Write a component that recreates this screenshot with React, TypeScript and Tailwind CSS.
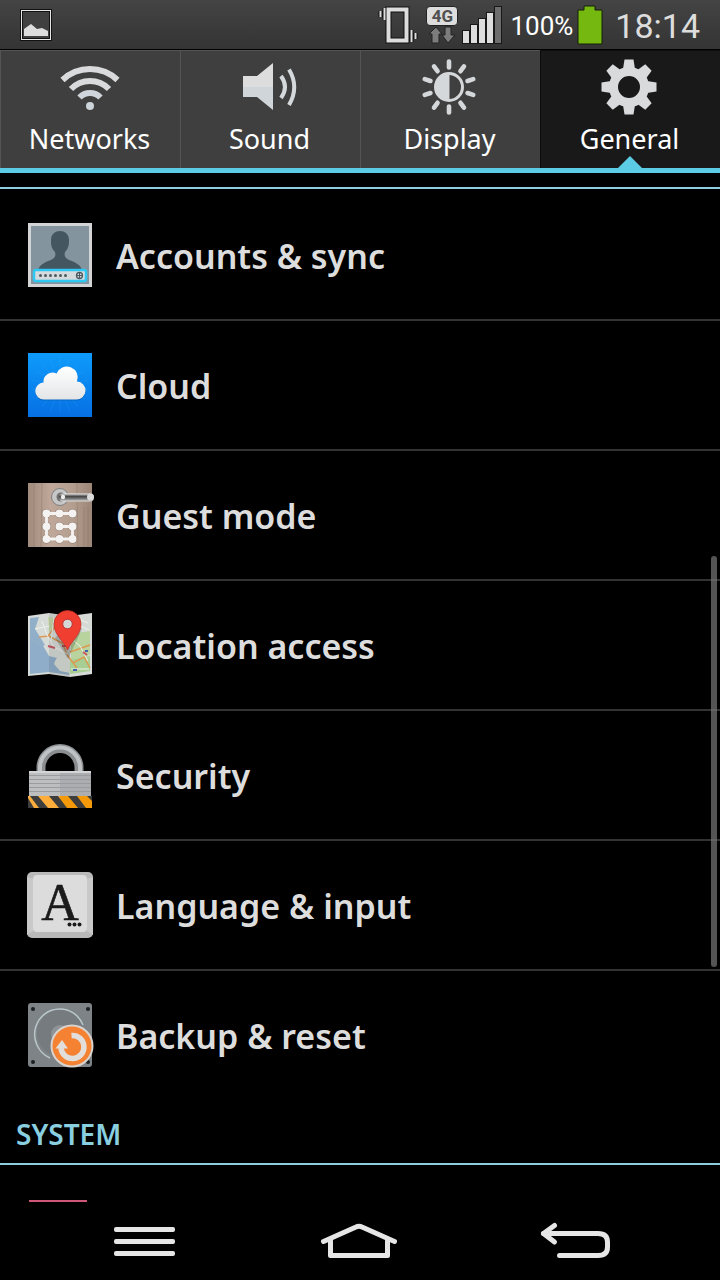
import React, { useState } from "react";

const NetworksIcon = () => (
  <svg viewBox="0 0 64 64" className="size-16" fill="none" stroke="#d8dadc" strokeWidth="6">
    <path d="M4.5 25A40 40 0 0 1 59.5 25" />
    <path d="M13 34A26.5 26.5 0 0 1 51 34" />
    <path d="M21.5 42.5A14.5 14.5 0 0 1 42.5 42.5" stroke="#cfd5da" />
    <circle cx="32" cy="51" r="4" fill="#cdd4d9" stroke="none" />
  </svg>
);

const SoundIcon = () => (
  <svg viewBox="0 0 64 64" className="size-16" fill="none">
    <path d="M5 21H19L35 8V32H5Z" fill="#dddddd" />
    <path d="M5 32H35V55L19 42H5Z" fill="#d0d5d9" />
    <path d="M43 21Q51 32 43 43M51 14.5Q61.5 32 51 50" stroke="#d5d9dc" strokeWidth="4" />
  </svg>
);

const DisplayIcon = () => (
  <svg viewBox="0 0 64 64" className="size-16" fill="none" stroke="#d5d8da">
    <circle cx="31" cy="32" r="13.5" strokeWidth="3" />
    <path d="M31 18.5A13.5 13.5 0 0 0 31 45.5Z" fill="#d5d8da" />
    {[0, 36, 72, 108, 144, 180, 216, 252, 288, 324].map((angle) => (
      <path key={angle} d="M31 6.5V12.5" strokeWidth="4.6" strokeLinecap="round" transform={`rotate(${angle} 31 32)`} />
    ))}
  </svg>
);

const GeneralIcon = () => (
  <svg viewBox="0 0 64 64" className="size-16" fill="#d8dadc">
    <circle cx="31" cy="32" r="15.5" fill="none" stroke="#d8dadc" strokeWidth="9" />
    {[0, 45, 90, 135, 180, 225, 270, 315].map((angle) => (
      <path key={angle} d="M26.5 4.5H35.5L37 14H25Z" transform={`rotate(${angle} 31 32)`} />
    ))}
  </svg>
);

const AccountsIcon = () => (
  <svg viewBox="0 0 72 72" className="size-[72px]">
    <rect x="4" y="4" width="64" height="64" fill="#d2d4d5" />
    <rect x="7" y="7" width="58" height="58" fill="#84949f" />
    <path d="M14 52C15 45 22 43 27 41C31 39 32 37 31 33C27 29 27 25 27 21C27 9 45 9 45 21C45 25 45 29 41 33C40 37 41 39 45 41C50 43 57 45 58 52Z" fill="#44565f" />
    <rect x="10" y="51" width="52" height="11" rx="2" fill="#d5dadd" stroke="#2fc8f2" strokeWidth="2.5" />
    {[16, 21, 26, 31, 36, 41].map((x) => (
      <circle key={x} cx={x + 0.5} cy="56.5" r="1.5" fill="#4b5960" />
    ))}
    <circle cx="55.5" cy="56.5" r="3" fill="none" stroke="#4b5960" strokeWidth="1.3" />
    <path d="M52.5 56.5H58.5M55.5 53.5V59.5" stroke="#4b5960" />
  </svg>
);

const CloudIcon = () => (
  <svg viewBox="0 0 72 72" className="size-[72px]">
    <defs>
      <linearGradient id="sky" x2="0" y2="1">
        <stop stopColor="#0e9cfb" />
        <stop offset="1" stopColor="#066fe4" />
      </linearGradient>
      <linearGradient id="cloud" x2="0" y2="1">
        <stop stopColor="#ffffff" />
        <stop offset="1" stopColor="#e3e5e7" />
      </linearGradient>
    </defs>
    <rect x="4" y="4" width="64" height="64" fill="url(#sky)" />
    {[0, 20, 40, 60, 80, 100, 120, 140, 160].map((angle) => (
      <path key={angle} d="M36 8V64" stroke="#3ab0ff" strokeOpacity="0.2" transform={`rotate(${angle} 36 36)`} />
    ))}
    <path d="M20 51.5A8.5 8.5 0 0 1 19.5 34.5A9 9 0 0 1 32.5 25.5A11 11 0 0 1 53 33.500A9 9 0 0 1 52 51.5Z" fill="#0557a8" opacity="0.6" />
    <path d="M20 50.5A8.5 8.5 0 0 1 19.5 33.5A9 9 0 0 1 32.5 24.5A11 11 0 0 1 53 32.5A9 9 0 0 1 52 50.5Z" fill="url(#cloud)" />
  </svg>
);

const GuestIcon = () => (
  <svg viewBox="0 0 72 72" className="size-[72px]">
    <defs>
      <linearGradient id="wood" x2="1" y2="0">
        <stop stopColor="#a08a7b" />
        <stop offset="0.35" stopColor="#bfa899" />
        <stop offset="0.7" stopColor="#b49e8f" />
        <stop offset="1" stopColor="#9b8576" />
      </linearGradient>
      <linearGradient id="handle" x2="0" y2="1">
        <stop stopColor="#f0f0f0" />
        <stop offset="0.35" stopColor="#444444" />
        <stop offset="0.65" stopColor="#777777" />
        <stop offset="1" stopColor="#e0e0e0" />
      </linearGradient>
    </defs>
    <rect x="4" y="4" width="64" height="64" fill="url(#wood)" />
    <path d="M10 4V68M18 4L17 68M60 28V68M53 4L54 68M64 28V68" stroke="#7d6656" strokeOpacity="0.3" />
    <circle cx="36" cy="18" r="8.5" fill="#c6c6c6" stroke="#808080" />
    <circle cx="37" cy="18" r="4.5" fill="#6e6e6e" />
    <rect x="35" y="14.5" width="35" height="8" rx="4" fill="url(#handle)" />
    <circle cx="66.5" cy="18" r="3.5" fill="#dcdcdc" />
    <circle cx="39" cy="18" r="2.2" fill="#eeeeee" />
    {[34.5, 47.5, 60].map((y) =>
      [22.5, 35.5, 48.5].map((x) => <circle key={`${x}-${y}`} cx={x} cy={y} r="4.6" fill="#8a7567" />)
    )}
    <path d="M48.5 34.5H22.5V60H48.5V47.5H36" fill="none" stroke="#f4f3f2" strokeWidth="2.8" />
    {[34.5, 47.5, 60].map((y) =>
      [22.5, 35.5, 48.5].map((x) => <circle key={`${x}-${y}`} cx={x} cy={y} r="4" fill="#f4f3f2" />)
    )}
  </svg>
);

const LocationIcon = () => (
  <svg viewBox="0 0 72 72" className="size-[72px]">
    <path d="M4 7L25 4L46 7L68 4V65L46 68L25 65L4 67Z" fill="#d6dbd7" />
    <path d="M6 28L18 35L25 47L33 49L45 62V66L25 63L6 65Z" fill="#8fadc8" />
    <path d="M6 9L15 8L11 20L16 28L21 36L17 38L6 33Z" fill="#91afc9" />
    <path d="M24 8L45 10L44 21L33 18L25 23Z" fill="#c6d6a7" />
    <path d="M47 25L66 22V45L58 51L47 57Z" fill="#b9d39e" />
    <path d="M32 50L38 46L46 50V64L36 62L30 55Z" fill="#d9ddd6" />
    <path d="M46 51L66 47V62L46 65Z" fill="#a8cf93" />
    <path d="M15 28L25 27L32 31L38 34L44 47L53 59M24 27L34 14L45 14M49 54L60 48L66 59M46 43L66 36" fill="none" stroke="#dc9a52" strokeWidth="1.5" />
    <path d="M18 12L23 26L30 38L44 45M11 20L25 17M48 30L56 37L64 52M55 10L64 14M54 16L65 21M30 8L27 33M47 60H65" fill="none" stroke="#eef0ea" />
    <path d="M24 37L31 39M38 37H43M59 43L63 46" stroke="#c7545d" strokeWidth="2" />
    <path d="M49 61H53M61 42H64M38 31H43" stroke="#465fb0" strokeWidth="2" />
    <path d="M25 4L46 7V68L25 65Z" fill="#303840" opacity="0.12" />
    <path d="M44 50L31 29L48 8L58 20Z" fill="#000000" opacity="0.18" />
    <path d="M43.5 41C40 32 30 26 30 15A13.5 13.5 0 0 1 57 15C57 26 47 32 43.5 41Z" fill="#f03f31" stroke="#bc2922" strokeWidth="0.7" />
    <circle cx="43.5" cy="15" r="4.8" fill="#d6d6d6" stroke="#bc3029" />
  </svg>
);

const SecurityIcon = () => (
  <svg viewBox="0 0 72 72" className="size-[72px]">
    <defs>
      <clipPath id="tape">
        <rect x="4" y="57" width="64" height="12" />
      </clipPath>
    </defs>
    <path d="M17 33V28.5A19 19 0 0 1 55 28.5V33" fill="none" stroke="#8b8e91" strokeWidth="9" />
    <path d="M16 33V28.5A20 20 0 0 1 56 28.5V33" fill="none" stroke="#bfc2c4" strokeWidth="4" />
    <rect x="5" y="32" width="62" height="25" fill="#bcbec0" />
    <rect x="36" y="32" width="31" height="25" fill="#abadb0" />
    <path d="M5 36.5H67M5 40.5H67M5 44.5H67M5 48.5H67M5 52.5H67" stroke="#9a9da0" />
    <path d="M5 33H67" stroke="#d4d5d6" strokeWidth="2" />
    <g clipPath="url(#tape)">
      <path d="M4 57H68V69H4Z" fill="#f49a0a" />
      <path d="M4 57H36V69H4Z" fill="#ffad3b" />
      <path d="M6 57H14L24 69H15ZM25 57H34L43 69H35ZM44 57H53L62 69H54ZM63 57H72V66ZM-4 59H4L10 69H0Z" fill="#3d3d3d" />
    </g>
  </svg>
);

const LanguageIcon = () => (
  <svg viewBox="0 0 72 72" className="size-[72px]">
    <rect x="3" y="3" width="66" height="66" rx="5" fill="#b9b9b9" />
    <path d="M3 8L9 10V62L3 66ZM63 10L69 8V66L63 62Z" fill="#c9c9c9" />
    <rect x="9" y="6" width="54" height="57" rx="4" fill="#dcdcdc" />
    <text x="36" y="51" textAnchor="middle" fontSize="52" fill="#1b1b1b" stroke="#1b1b1b" strokeWidth="0.6" className="font-['Liberation_Serif',serif] font-normal">
      A
    </text>
    <circle cx="45.5" cy="55.5" r="2" fill="#1b1b1b" />
    <circle cx="50.5" cy="55.5" r="2" fill="#1b1b1b" />
    <circle cx="55.5" cy="55.5" r="2" fill="#1b1b1b" />
  </svg>
);

const BackupIcon = () => (
  <svg viewBox="0 0 72 72" className="size-[72px]">
    <rect x="4" y="4" width="64" height="64" rx="3" fill="#7d8386" />
    {[9, 64].map((x) => [10, 63].map((y) => <circle key={`${x}-${y}`} cx={x} cy={y} r="2" fill="#1d2022" />))}
    <path d="M26 59A26 26 0 0 1 12 27A25 25 0 0 1 59 26" fill="none" stroke="#b9c6cc" strokeWidth="1.5" />
    <circle cx="36" cy="34" r="23" fill="#757b7f" />
    <circle cx="36" cy="35" r="9" fill="#8e9497" />
    <circle cx="48" cy="47" r="20.5" fill="#f58232" stroke="#d9d3cf" strokeWidth="2" />
    <path d="M47.5 36.5A11.5 11.5 0 1 1 37 49" fill="none" stroke="#e2dedb" strokeWidth="5.5" />
    <path d="M31.5 49.5L38 41L44 49.5Z" fill="#e2dedb" />
  </svg>
);

const tabs = [
  { label: "Networks", icon: <NetworksIcon /> },
  { label: "Sound", icon: <SoundIcon /> },
  { label: "Display", icon: <DisplayIcon /> },
  { label: "General", icon: <GeneralIcon /> },
];

const items = [
  { label: "Accounts & sync", icon: <AccountsIcon /> },
  { label: "Cloud", icon: <CloudIcon /> },
  { label: "Guest mode", icon: <GuestIcon /> },
  { label: "Location access", icon: <LocationIcon /> },
  { label: "Security", icon: <SecurityIcon /> },
  { label: "Language & input", icon: <LanguageIcon /> },
  { label: "Backup & reset", icon: <BackupIcon /> },
];

function StatusBar() {
  return (
    <div className="flex h-[50px] shrink-0 items-center border-b border-black bg-linear-to-b from-[#444444] to-[#343434] px-5 font-[Roboto,sans-serif] text-[#dddddd]">
      <svg viewBox="0 0 32 32" className="size-8">
        <rect x="1.5" y="1.5" width="29" height="29" fill="#404040" stroke="#111111" strokeWidth="3" />
        <rect x="1.5" y="1.5" width="29" height="29" fill="none" stroke="#e6e6e6" />
        <path d="M4 27V20L11 15L17 20L22 19L28 22V27Z" fill="#dddddd" />
      </svg>
      <div className="ml-auto flex items-center">
        <svg viewBox="0 0 40 40" className="size-10">
          <path d="M2.5 6V12M6.5 3V15M33.5 25V37M37.5 28V34" stroke="#111111" strokeWidth="4" />
          <rect x="10.5" y="4.500" width="18" height="31" fill="none" stroke="#111111" strokeWidth="6" />
          <rect x="10.5" y="4.500" width="18" height="31" fill="none" stroke="#dddddd" strokeWidth="4" />
          <path d="M2.5 6V12M6.5 3V15M33.5 25V37M37.5 28V34" stroke="#dddddd" strokeWidth="2" />
        </svg>
        <div className="ml-2 flex w-8 flex-col items-center pt-px">
          <span className="w-full rounded border border-[#222222] bg-[#dddddd] text-center text-[17px] leading-[18px] font-bold text-[#505050]">4G</span>
          <svg viewBox="0 0 28 18" className="h-[18px] w-7" fill="#7c7c7c" stroke="#222222">
            <path d="M8 1L14 8H11V17H4V8H1Z" />
            <path d="M17 1H23V9H27L20 17L14 9H17Z" />
          </svg>
        </div>
        <svg viewBox="0 0 40 38" className="ml-1 h-[38px] w-10 [paint-order:stroke]" fill="#dddddd" stroke="#181818" strokeWidth="2">
          <path d="M1 25H7V37H1ZM9 19H15V37H9ZM17 13H23V37H17ZM25 7H31V37H25Z" />
          <path d="M33 1H39V37H33Z" fill="#6d6d6d" />
        </svg>
        <span className="ml-2 pt-1 text-[26px] text-white">100%</span>
        <svg viewBox="0 0 26 40" className="ml-1 h-10 w-[26px]">
          <path d="M1 5H7V1H18V5H25V39H1Z" fill="#75b910" stroke="#151c08" />
        </svg>
        <span className="ml-3 pt-1 text-[34px]">18:14</span>
      </div>
    </div>
  );
}

export default function App() {
  const [activeTab, setActiveTab] = useState("General");

  return (
    <div className="flex h-screen flex-col bg-black font-['Noto_Sans',sans-serif]">
      <StatusBar />

      {/* Tabs */}
      <nav className="grid shrink-0 grid-cols-4 border-b-[5px] border-[#5ccbe6]">
        {tabs.map((tab) => (
          <button
            key={tab.label}
            onClick={() => setActiveTab(tab.label)}
            className={`relative flex h-[118px] flex-col items-center gap-1 border-t border-l pt-1 pr-0.5 text-[27px] leading-8 text-white ${
              activeTab === tab.label ? "border-[#0c0c0c] bg-[#191919]" : "border-[#555555] bg-[#3f3f3f]"
            }`}
          >
            {tab.icon}
            {tab.label}
            {activeTab === tab.label && (
              <svg viewBox="0 0 24 12" className="absolute bottom-0 h-3 w-6" fill="#5ccbe6">
                <path d="M0 12L12 0L24 12Z" />
              </svg>
            )}
          </button>
        ))}
      </nav>

      {/* Settings list */}
      <main className="relative min-h-0 flex-1 overflow-hidden">
        <div className="h-4 border-b-2 border-[#8acfe0]" />
        <ul>
          {items.map((item) => (
            <li key={item.label} className="border-t-2 border-[#333333] first:border-transparent">
              <button className="flex h-32 w-full items-center gap-5 pl-6 text-left text-[34px] font-semibold text-[#dddddd]">
                {item.icon}
                <span className="pt-0.5">{item.label}</span>
              </button>
            </li>
          ))}
        </ul>
        <h2 className="flex h-[66px] items-center border-b-2 border-[#8acfe0] px-4 pt-1.5 text-[28px] font-semibold text-[#8acfe0]">SYSTEM</h2>
        <div className="flex h-32 items-center pl-7">
          <svg viewBox="0 0 64 64" className="size-16">
            <rect x="1" y="3" width="58" height="58" fill="#cf5677" />
          </svg>
        </div>
        <div className="absolute top-[37.2%] right-[3px] h-[40%] w-1.5 rounded-full bg-[#777777]/70" />
      </main>

      {/* Navigation keys */}
      <footer className="grid h-[78px] shrink-0 grid-cols-3 items-center px-9">
        <button aria-label="Menu" className="flex justify-center">
          <svg viewBox="0 0 80 40" className="h-10 w-20" fill="#e6e6e6">
            <rect x="10" y="6" width="61" height="5" rx="2" />
            <rect x="10" y="18" width="61" height="5" rx="2" />
            <rect x="10" y="30" width="61" height="5" rx="2" />
          </svg>
        </button>
        <button aria-label="Home" className="flex justify-center">
          <svg viewBox="0 0 80 40" className="h-10 w-20" fill="none" stroke="#e6e6e6" strokeWidth="5" strokeLinecap="round" strokeLinejoin="round">
            <path d="M3.5 20.5L36 6Q39 4.5 42 6L74.5 20.5" />
            <path d="M10.5 20V34.5H67.5V20" />
          </svg>
        </button>
        <button aria-label="Back" className="flex justify-center">
          <svg viewBox="0 0 80 40" className="h-10 w-20" fill="none" stroke="#e6e6e6" strokeWidth="5" strokeLinecap="round" strokeLinejoin="round">
            <path d="M18.5 4.5L7.5 12.5L18.5 21" />
            <path d="M7.5 12.5H62Q71.5 12.5 71.5 21V26Q71.5 34.5 62 34.5H23.5" />
          </svg>
        </button>
      </footer>
    </div>
  );
}
